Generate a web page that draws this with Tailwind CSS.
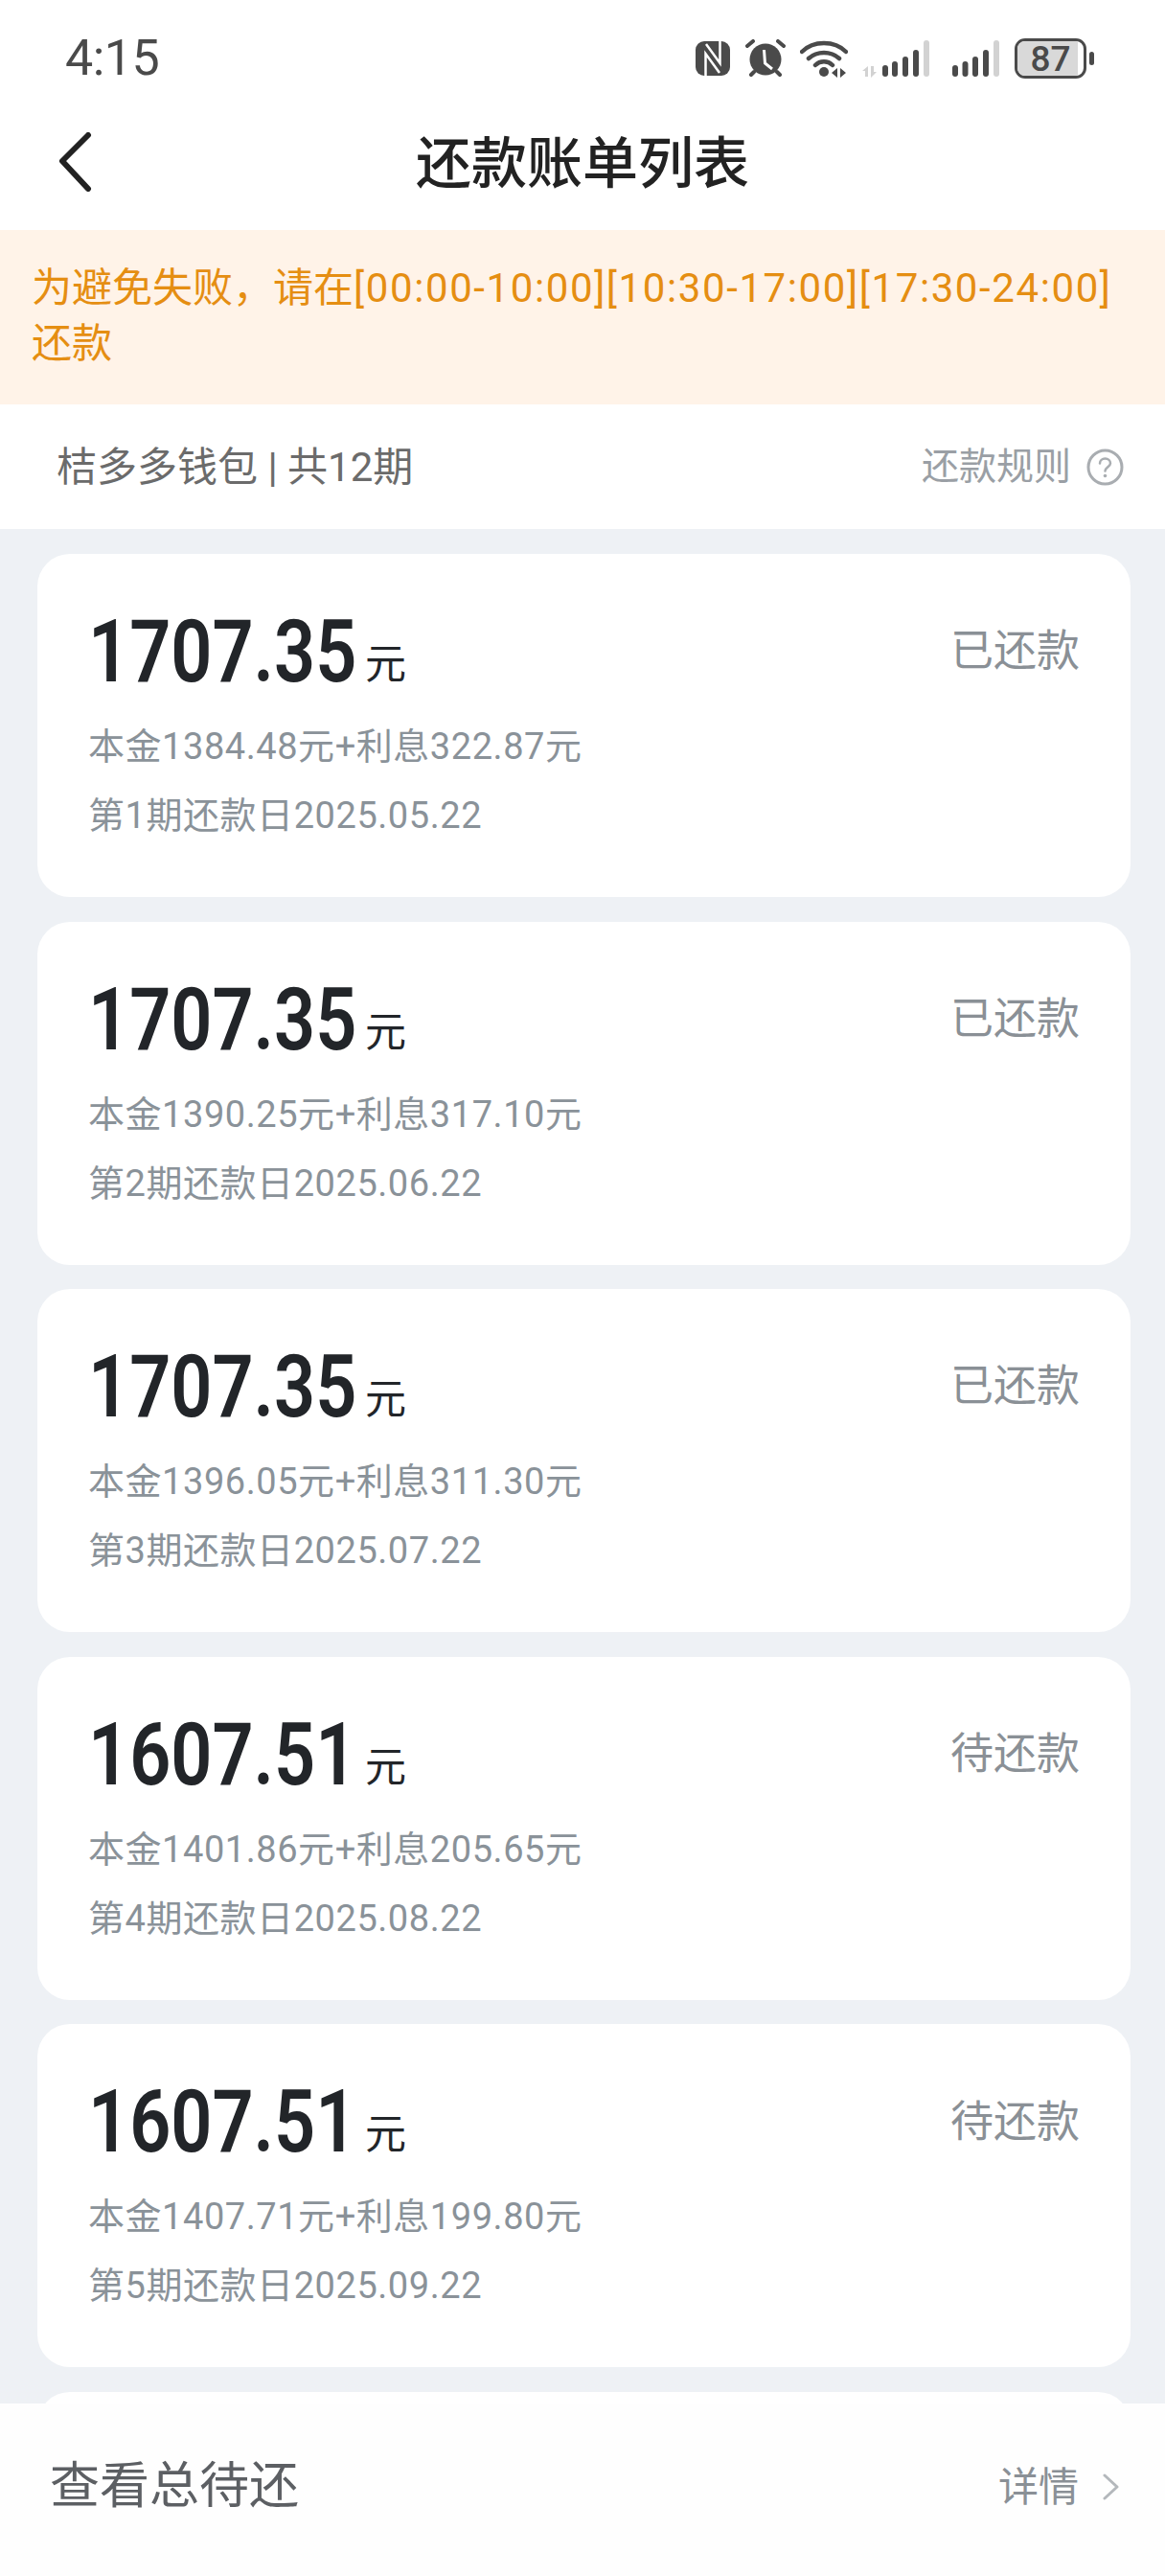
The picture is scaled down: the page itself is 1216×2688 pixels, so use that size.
<!doctype html>
<html lang="zh-CN">
<head>
    <meta charset="UTF-8">
    <title>还款账单列表</title>
    <script src="https://cdn.jsdelivr.net/npm/@tailwindcss/browser@4"></script>
</head>
<body class="font-['Roboto','Noto_Sans_CJK_SC',sans-serif]">
<div class="relative w-[1216px] h-[2688px] overflow-hidden bg-[#eef1f5]">

    <!-- status bar -->
    <div class="h-[120px] bg-white flex items-center justify-between pl-[68px] pr-[74px] pt-[2px]">
        <span class="text-[52px] leading-none text-[#4a4a4a] tracking-[-0.5px]">4:15</span>
        <div class="flex items-center">
            <svg class="w-[36px] h-[36px]" viewBox="0 0 36 36">
                <rect width="36" height="36" rx="9" fill="#4a4a4a"/>
                <path d="M10.500 36V13L25 33M25.500 0V23L11 3" fill="none" stroke="#fff" stroke-width="2.500"/>
            </svg>
            <svg class="ml-[16px] w-[42px] h-[40px]" viewBox="0 0 42 40">
                <circle cx="21" cy="21" r="16.500" fill="#4a4a4a"/>
                <path d="M19.500 11l1 14 7.500 6" fill="none" stroke="#fff" stroke-width="3"/>
                <path d="M2 7l6-5M40 7l-6-5M6 37l3-3M36 37l-3-3" stroke="#4a4a4a" stroke-width="4" stroke-linecap="round"/>
            </svg>
            <svg class="ml-[15px] w-[50px] h-[40px]" viewBox="0 0 50 40">
                <path d="M2 13C14 1 36 1 48 13M9 20C18 12 32 12 41 20M16 27C21 22 29 22 34 27" fill="none" stroke="#4a4a4a" stroke-width="4.500" stroke-linecap="round"/>
                <circle cx="25" cy="34" r="5" fill="#4a4a4a"/>
                <path d="M33 35l6-5v10zM42 30l6 5-6 5z" fill="#4a4a4a"/>
            </svg>
            <svg class="ml-[15px] w-[70px] h-[40px]" viewBox="0 0 70 40">
                <path d="M0 33l6-5v11H3v-6zM9 28h3v6h3l-6 6z" fill="#d2d2d2"/>
                <rect x="21" y="27" width="6" height="12" rx="3" fill="#4a4a4a"/>
                <rect x="31" y="23" width="6" height="16" rx="3" fill="#4a4a4a"/>
                <rect x="42" y="18" width="6" height="21" rx="3" fill="#4a4a4a"/>
                <rect x="53" y="11" width="6" height="28" rx="3" fill="#4a4a4a"/>
                <rect x="64" y="1" width="6" height="38" rx="3" fill="#d2d2d2"/>
            </svg>
            <svg class="ml-[24px] w-[49px] h-[40px]" viewBox="0 0 49 40">
                <rect x="0" y="27" width="6" height="12" rx="3" fill="#4a4a4a"/>
                <rect x="10.500" y="23" width="6" height="16" rx="3" fill="#4a4a4a"/>
                <rect x="21" y="18" width="6" height="21" rx="3" fill="#4a4a4a"/>
                <rect x="32" y="11" width="6" height="28" rx="3" fill="#4a4a4a"/>
                <rect x="43" y="1" width="6" height="38" rx="3" fill="#d2d2d2"/>
            </svg>
            <div class="ml-[16px] relative w-[75px] h-[42px] rounded-[11px] border-[3px] border-[#4a4a4a] overflow-hidden flex items-center justify-center bg-white">
                <div class="absolute left-0 top-0 bottom-0 w-[63px] bg-[#d9d9d9]"></div>
                <span class="relative text-[37px] leading-none font-medium text-[#4a4a4a]">87</span>
            </div>
            <div class="ml-[3px] w-[5px] h-[14px] rounded-full bg-[#4a4a4a]"></div>
        </div>
    </div>

    <!-- title -->
    <div class="relative h-[120px] bg-white flex items-center justify-center">
        <svg class="absolute left-[60px] top-[18px] w-[36px] h-[62px]" viewBox="0 0 36 62">
            <path d="M32 3L5 30l27 29" fill="none" stroke="#222" stroke-width="6" stroke-linecap="round" stroke-linejoin="round"/>
        </svg>
        <h1 class="text-[58px] leading-none font-medium text-[#222] pb-[18px]">还款账单列表</h1>
    </div>

    <!-- notice -->
    <div class="h-[182px] bg-[#fff3e8] px-[33px] pt-[32px] text-[42px] leading-[58px] text-[#e58e12]">
        为避免失败，请在<span class="tracking-[1.6px]">[00:00-10:00][10:30-17:00][17:30-24:00]</span>还款
    </div>

    <!-- plan row -->
    <div class="h-[130px] bg-white flex items-center justify-between pl-[59px] pr-[43px]">
        <span class="text-[42px] text-[#6b6b6b]">桔多多钱包 | 共12期</span>
        <div class="flex items-center gap-[16px]">
            <span class="text-[39px] text-[#9a9fa5]">还款规则</span>
            <svg class="w-[39px] h-[39px]" viewBox="0 0 39 39">
                <circle cx="19.500" cy="19.500" r="17.500" fill="none" stroke="#a9adb1" stroke-width="3"/>
                <path d="M14 15.500c0-3 2.500-5 5.500-5s5.500 2 5.500 5c0 3.500-5.500 4-5.500 8" fill="none" stroke="#a9adb1" stroke-width="2.500" stroke-linecap="round"/>
                <circle cx="19.500" cy="28.500" r="1.800" fill="#a9adb1"/>
            </svg>
        </div>
    </div>

    <!-- bills -->
    <div class="pl-[39px] pr-[36px] pt-[26px] flex flex-col gap-[25.6px]">
        <div class="h-[358px] bg-white rounded-[34px] px-[53px] pt-[56px]">
            <div class="flex items-center justify-between h-[92px]">
                <div class="flex items-end">
                    <span class="w-[289px] text-[91px] leading-[92px] font-semibold text-[#222529] whitespace-nowrap origin-left scale-x-[0.83]">1707.35</span>
                    <span class="text-[43px] leading-[66px] text-[#222529]">元</span>
                </div>
                <span class="text-[45px] text-[#8a9096]">已还款</span>
            </div>
            <div class="mt-[17px] text-[38px] leading-[72px] tracking-[0.55px] text-[#8a9299]">本金1384.48元+利息322.87元</div>
            <div class="text-[38px] leading-[72px] tracking-[0.55px] text-[#8a9299]">第1期还款日2025.05.22</div>
        </div>
        <div class="h-[358px] bg-white rounded-[34px] px-[53px] pt-[56px]">
            <div class="flex items-center justify-between h-[92px]">
                <div class="flex items-end">
                    <span class="w-[289px] text-[91px] leading-[92px] font-semibold text-[#222529] whitespace-nowrap origin-left scale-x-[0.83]">1707.35</span>
                    <span class="text-[43px] leading-[66px] text-[#222529]">元</span>
                </div>
                <span class="text-[45px] text-[#8a9096]">已还款</span>
            </div>
            <div class="mt-[17px] text-[38px] leading-[72px] tracking-[0.55px] text-[#8a9299]">本金1390.25元+利息317.10元</div>
            <div class="text-[38px] leading-[72px] tracking-[0.55px] text-[#8a9299]">第2期还款日2025.06.22</div>
        </div>
        <div class="h-[358px] bg-white rounded-[34px] px-[53px] pt-[56px]">
            <div class="flex items-center justify-between h-[92px]">
                <div class="flex items-end">
                    <span class="w-[289px] text-[91px] leading-[92px] font-semibold text-[#222529] whitespace-nowrap origin-left scale-x-[0.83]">1707.35</span>
                    <span class="text-[43px] leading-[66px] text-[#222529]">元</span>
                </div>
                <span class="text-[45px] text-[#8a9096]">已还款</span>
            </div>
            <div class="mt-[17px] text-[38px] leading-[72px] tracking-[0.55px] text-[#8a9299]">本金1396.05元+利息311.30元</div>
            <div class="text-[38px] leading-[72px] tracking-[0.55px] text-[#8a9299]">第3期还款日2025.07.22</div>
        </div>
        <div class="h-[358px] bg-white rounded-[34px] px-[53px] pt-[56px]">
            <div class="flex items-center justify-between h-[92px]">
                <div class="flex items-end">
                    <span class="w-[289px] text-[91px] leading-[92px] font-semibold text-[#222529] whitespace-nowrap origin-left scale-x-[0.83]">1607.51</span>
                    <span class="text-[43px] leading-[66px] text-[#222529]">元</span>
                </div>
                <span class="text-[45px] text-[#8a9096]">待还款</span>
            </div>
            <div class="mt-[17px] text-[38px] leading-[72px] tracking-[0.55px] text-[#8a9299]">本金1401.86元+利息205.65元</div>
            <div class="text-[38px] leading-[72px] tracking-[0.55px] text-[#8a9299]">第4期还款日2025.08.22</div>
        </div>
        <div class="h-[358px] bg-white rounded-[34px] px-[53px] pt-[56px]">
            <div class="flex items-center justify-between h-[92px]">
                <div class="flex items-end">
                    <span class="w-[289px] text-[91px] leading-[92px] font-semibold text-[#222529] whitespace-nowrap origin-left scale-x-[0.83]">1607.51</span>
                    <span class="text-[43px] leading-[66px] text-[#222529]">元</span>
                </div>
                <span class="text-[45px] text-[#8a9096]">待还款</span>
            </div>
            <div class="mt-[17px] text-[38px] leading-[72px] tracking-[0.55px] text-[#8a9299]">本金1407.71元+利息199.80元</div>
            <div class="text-[38px] leading-[72px] tracking-[0.55px] text-[#8a9299]">第5期还款日2025.09.22</div>
        </div>
        <div class="h-[358px] bg-white rounded-[34px]"></div>
    </div>

    <!-- footer sits over the list -->
    <div class="absolute left-0 right-0 bottom-0 h-[180px] bg-[#fefefe] flex items-center justify-between pl-[52px] pr-[47px] pb-[6px]">
        <span class="text-[52px] text-[#5c5f63]">查看总待还</span>
        <div class="flex items-center gap-[24px]">
            <span class="text-[42px] text-[#8a9096]">详情</span>
            <svg class="w-[19px] h-[28px]" viewBox="0 0 19 28">
                <path d="M3 2l13 12L3 26" fill="none" stroke="#b4b8bc" stroke-width="3" stroke-linecap="round" stroke-linejoin="round"/>
            </svg>
        </div>
    </div>
</div>
</body>
</html>
